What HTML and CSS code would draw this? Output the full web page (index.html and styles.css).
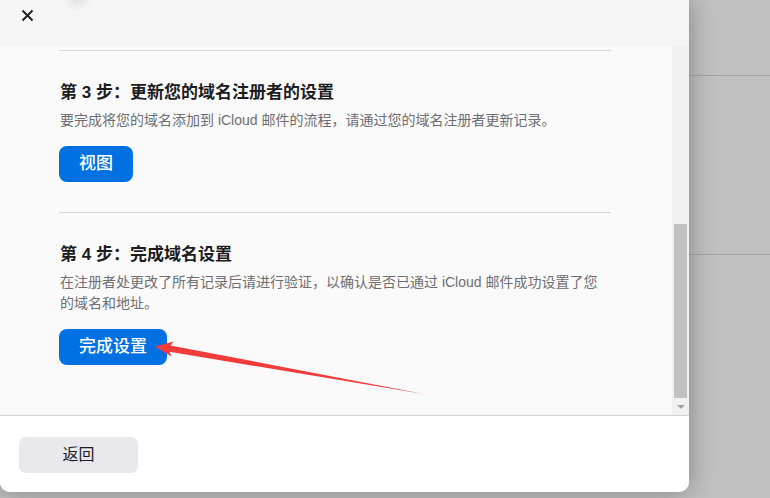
FILE: index.html
```html
<!DOCTYPE html>
<html lang="zh-CN">
<head>
<meta charset="utf-8">
<title>完成域名设置</title>
<link rel="stylesheet" href="styles.css">
</head>
<body>
<div class="modal">
  <header class="modal-head">
    <button class="close" aria-label="关闭">
      <svg width="13" height="13" viewBox="0 0 13 13"><path d="M1.5 1.5 L11.5 11.5 M11.5 1.5 L1.5 11.5" stroke="#1f1f1f" stroke-width="1.9" fill="none"/></svg>
    </button>
  </header>
  <div class="modal-body">
    <div class="content">
      <hr class="divider">
      <section class="step">
        <h2 class="step-title">第 3 步：更新您的域名注册者的设置</h2>
        <p class="step-desc">要完成将您的域名添加到 iCloud 邮件的流程，请通过您的域名注册者更新记录。</p>
        <button class="btn-primary">视图</button>
      </section>
      <hr class="divider">
      <section class="step">
        <h2 class="step-title">第 4 步：完成域名设置</h2>
        <p class="step-desc">在注册者处更改了所有记录后请进行验证，以确认是否已通过 iCloud 邮件成功设置了您的域名和地址。</p>
        <button class="btn-primary">完成设置</button>
      </section>
    </div>
    <div class="scrollbar">
      <div class="thumb"></div>
      <div class="scroll-arrow"></div>
    </div>
  </div>
  <footer class="modal-foot">
    <button class="btn-secondary">返回</button>
  </footer>
  <svg class="annotation" width="689" height="492" viewBox="0 0 689 492">
    <polygon points="155,346.5 173.5,341.5 170.5,345.4 425,394.3 169.5,351.8 171.5,356.5" fill="#f23b3b"/>
  </svg>
</div>
</body>
</html>
```
FILE: styles.css
```css
* { box-sizing: border-box; }
html, body { margin: 0; padding: 0; }
body {
  width: 770px;
  height: 498px;
  overflow: hidden;
  background-color: #c0c0c0;
  background-image: linear-gradient(#a4a4a4, #a4a4a4), linear-gradient(#a4a4a4, #a4a4a4);
  background-size: 100% 1px, 100% 1px;
  background-position: 0 75px, 0 254px;
  background-repeat: no-repeat;
  font-family: "Liberation Sans", "Noto Sans CJK SC", sans-serif;
}
.modal {
  position: relative;
  width: 689px;
  height: 492px;
  display: flex;
  flex-direction: column;
  background: #fafafa;
  border-radius: 0 0 10px 10px;
  box-shadow: 0 0 26px rgba(0, 0, 0, 0.32);
  overflow: hidden;
}
.modal-head {
  height: 46px;
  flex: none;
  padding: 9px 0 0 21px;
  background: radial-gradient(ellipse 16px 11px at 77px 0, #e2e2e2, rgba(246,246,246,0)), #f6f6f6;
}
.close {
  display: block;
  width: 13px;
  height: 13px;
  padding: 0;
  border: 0;
  background: none;
}
.close svg { display: block; }
.modal-body {
  flex: 1;
  display: flex;
  min-height: 0;
}
.content {
  flex: 1;
  padding: 4px 61px 0 59px;
  background: #fafafa;
}
.divider {
  margin: 0;
  border: 0;
  height: 1px;
  background: #d6d6d6;
}
.step {
  padding: 30px 0 30px 1px;
}
.step-title {
  margin: 0;
  font-size: 17px;
  line-height: 24px;
  font-weight: 700;
  color: #1d1d1f;
}
.step-desc {
  margin: 5px 0 0;
  font-size: 14px;
  line-height: 21px;
  color: #6e6e73;
}
.btn-primary {
  display: block;
  margin: 15px 0 0 -1px;
  height: 36px;
  padding: 0 20px;
  border: 0;
  border-radius: 8px;
  background: #0071e3;
  color: #fff;
  font-family: inherit;
  font-size: 17px;
  font-weight: 500;
  line-height: 36px;
}
.scrollbar {
  width: 17px;
  flex: none;
  background: #f1f1f1;
  display: flex;
  flex-direction: column;
  justify-content: flex-end;
  align-items: center;
}
.thumb {
  width: 13px;
  height: 174px;
  background: #c1c1c1;
}
.scroll-arrow {
  width: 17px;
  height: 17px;
  display: flex;
  align-items: center;
  justify-content: center;
}
.scroll-arrow::before {
  content: "";
  width: 0;
  height: 0;
  border-left: 4px solid transparent;
  border-right: 4px solid transparent;
  border-top: 4px solid #a3a3a3;
}
.modal-foot {
  height: 77px;
  flex: none;
  border-top: 1px solid #d2d2d7;
  background: #fff;
  padding: 21px 0 0 19px;
}
.btn-secondary {
  display: block;
  width: 119px;
  height: 36px;
  border: 0;
  border-radius: 7px;
  background: #e8e8ed;
  color: #1d1d1f;
  font-family: inherit;
  font-size: 16px;
  line-height: 36px;
  padding: 0;
}
.annotation {
  position: absolute;
  top: 0;
  left: 0;
  pointer-events: none;
}
```
